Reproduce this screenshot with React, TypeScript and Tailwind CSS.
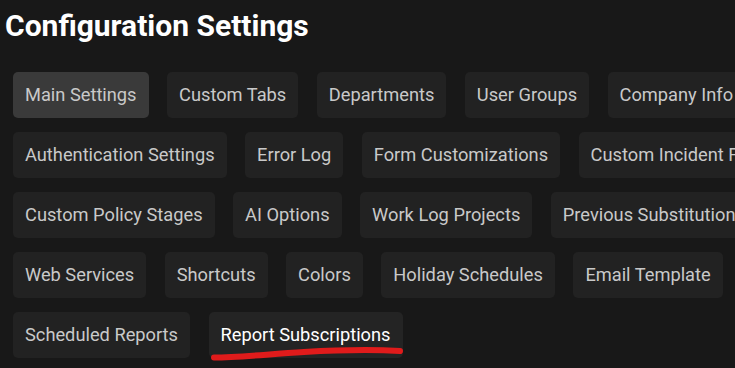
import React from 'react';

const items = [
  'Main Settings',
  'Custom Tabs',
  'Departments',
  'User Groups',
  'Company Info',
  'Authentication Settings',
  'Error Log',
  'Form Customizations',
  'Custom Incident Fields',
  'Custom Policy Stages',
  'AI Options',
  'Work Log Projects',
  'Previous Substitutions',
  'Web Services',
  'Shortcuts',
  'Colors',
  'Holiday Schedules',
  'Email Template',
  'Scheduled Reports',
  'Report Subscriptions',
];

export default function App() {
  return (
    <div
      className="h-[368px] w-[735px] overflow-hidden bg-[#181818] text-[#c9c9c9]"
      style={{ fontFamily: 'Roboto, "Liberation Sans", sans-serif' }}
    >
      <h1 className="pl-[5px] pt-[7px] text-[30px] font-bold leading-[38px] text-white">
        Configuration Settings
      </h1>
      <div className="mt-[27px] flex w-[840px] flex-wrap gap-x-[18.5px] gap-y-[14px] pl-[13px]">
        {items.map((label) => {
          const active = label === 'Main Settings';
          const current = label === 'Report Subscriptions';
          return (
            <div key={label} className="relative">
              <button
                className={`h-[46px] rounded-[5px] px-[12px] text-[18.25px] leading-none ${
                  active
                    ? 'bg-[#3a3a3a] text-[#c9c9c9]'
                    : current
                      ? 'bg-[#242424] text-white'
                      : 'bg-[#222222] text-[#c9c9c9]'
                }`}
              >
                {label}
              </button>
              {current && (
                <svg
                  className="pointer-events-none absolute left-0 top-[28px]"
                  width="200"
                  height="24"
                  viewBox="0 0 200 24"
                >
                  <path
                    d="M5 17.5 C 30 17.5, 60 14, 95 12 S 165 9.5, 191 11"
                    stroke="#e01b1b"
                    strokeWidth="6"
                    strokeLinecap="round"
                    fill="none"
                  />
                </svg>
              )}
            </div>
          );
        })}
      </div>
    </div>
  );
}
